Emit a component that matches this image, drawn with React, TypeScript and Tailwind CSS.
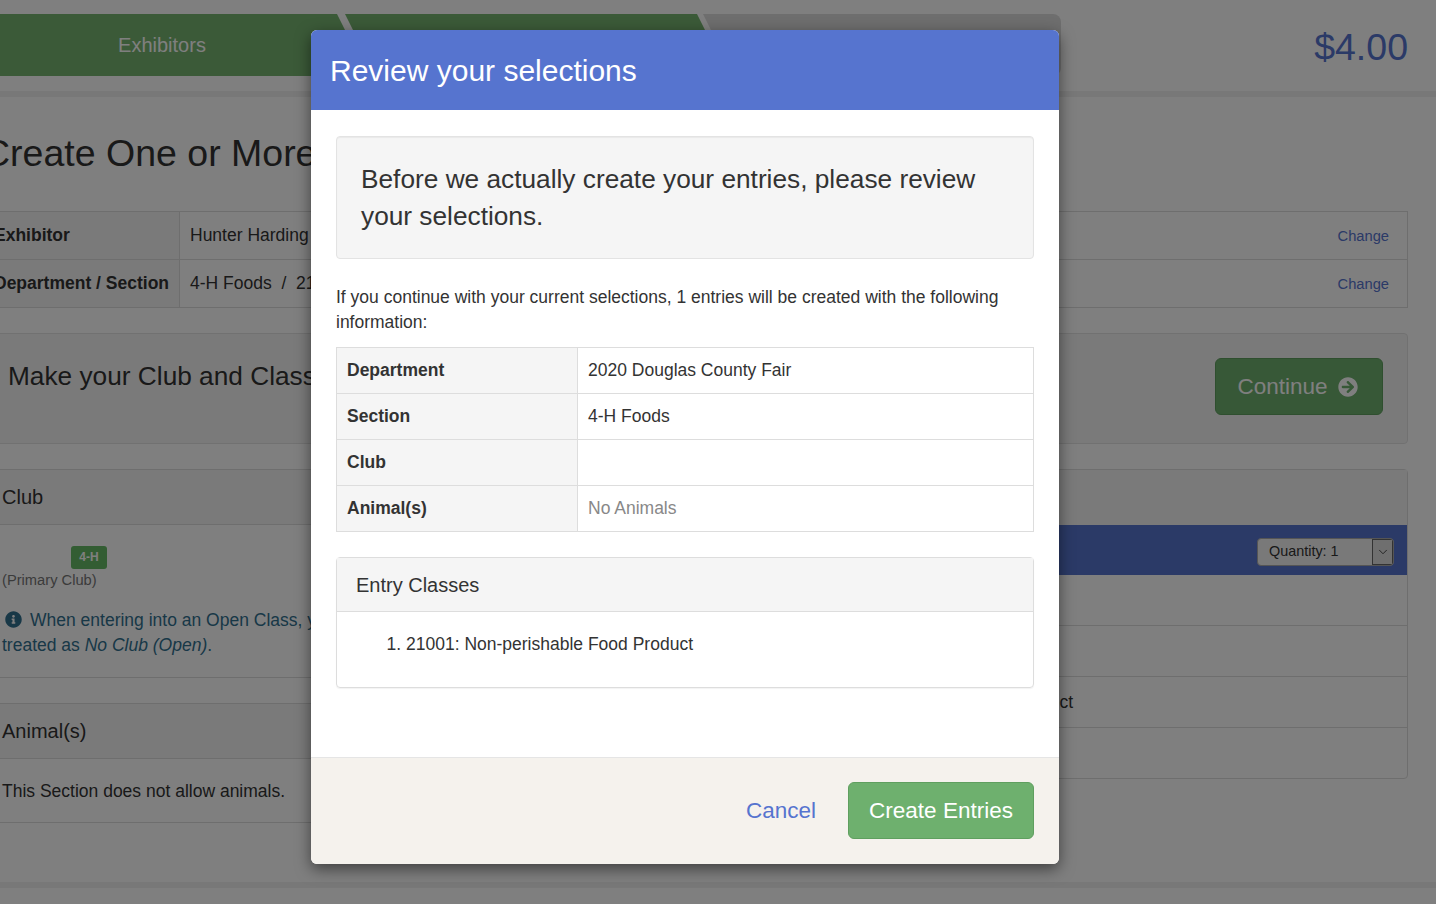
import { FaArrowCircleRight, FaInfoCircle } from "react-icons/fa";
import { LuChevronDown } from "react-icons/lu";

const summary = [
  { label: "Exhibitor", value: "Hunter Harding" },
  { label: "Department / Section", value: "4-H Foods  /  21 - Non-perishable Food Product" },
];

const reviewRows = [
  { label: "Department", value: "2020 Douglas County Fair" },
  { label: "Section", value: "4-H Foods" },
  { label: "Club", value: "" },
  { label: "Animal(s)", value: "No Animals", muted: true },
];

function Background() {
  return (
    <div className="w-[1436px] h-[904px] bg-white overflow-hidden text-[#333] text-[17.5px] flex flex-col">
      {/* top bar */}
      <div className="h-[97px] shrink-0 border-b-[6px] border-[#f0f0f0] flex items-start justify-between pt-[14px] pr-[28px]">
        <div className="flex w-[1061px] h-[62px] rounded-r-lg overflow-hidden text-white text-[20px]">
          <div className="w-[368px] shrink-0 h-full bg-[#76b470] pr-[44px] flex items-center justify-center [clip-path:polygon(0_0,337px_0,368px_62px,0_62px)]">
            Exhibitors
          </div>
          <div className="-ml-[24px] w-[384px] shrink-0 h-full bg-[#76b470] [clip-path:polygon(1px_0,353px_0,384px_62px,32px_62px)]" />
          <div className="-ml-[25px] w-[358px] shrink-0 h-full bg-[#dcdcdc] [clip-path:polygon(0_0,100%_0,100%_100%,31px_100%)]" />
        </div>
        <div className="text-[37.5px] leading-[62px] text-[#5674cf] pt-[2px]">$4.00</div>
      </div>

      <div className="flex-1 -ml-[22px] w-[1430px]">
        <h1 className="text-[37.5px] leading-[40px] mt-[36px] mb-[38px] pl-[5px] whitespace-nowrap">Create One or More Entries</h1>

        {/* summary table */}
        <div className="border border-[#ddd] mb-[25px]">
          {summary.map((row, i) => (
            <div key={row.label} className={`flex items-center ${i > 0 ? "h-[48px] border-t border-[#ddd]" : "h-[47px]"}`}>
              <div className="w-[201px] h-full shrink-0 bg-[#f5f5f5] border-r border-[#ddd] flex items-center pl-[10px] font-bold whitespace-nowrap">
                <span className="pl-[5px]">{row.label}</span>
              </div>
              <div className="flex-1 pl-[10px] whitespace-pre">{row.value}</div>
              <a className="pr-[18px] pt-[2px] text-[14.7px] text-[#5674cf]">Change</a>
            </div>
          ))}
        </div>

        {/* club and class prompt */}
        <div className="h-[111px] bg-[#f5f5f5] border border-[#e3e3e3] rounded flex items-start justify-between pl-[29px] pr-[24px] pt-[24px] mb-[25px]">
          <div className="text-[26.25px] leading-[36px]">Make your Club and Class selections</div>
          <button className="h-[57px] w-[168px] bg-[#6eb06e] border border-[#5f9f5f] rounded-md text-white text-[22.5px] flex items-center justify-center gap-[10px] pr-[3px]">
            Continue <FaArrowCircleRight className="text-[20px]" />
          </button>
        </div>

        <div className="flex gap-[20px] items-start">
          <div className="w-[722px] shrink-0">
            <div className="border border-[#ddd] rounded mb-[25px]">
              <div className="h-[55px] bg-[#f5f5f5] border-b border-[#ddd] flex items-center pl-[23px] text-[20px]">Club</div>
              <div className="h-[152px] pl-[23px] pt-[17px]">
                <div className="pl-[69px] h-[27px]">
                  <span className="inline-block bg-[#66bb66] text-white font-bold text-[12px] leading-[23px] h-[23px] w-[36px] text-center rounded-[3px]">4-H</span>
                </div>
                <div className="text-[14.7px] leading-[22px] text-[#777]">(Primary Club)</div>
                <div className="text-[#31708f] leading-[25px] mt-[17px]">
                  <FaInfoCircle className="inline text-[17px] ml-[3px] mr-[8px] -mt-[3px]" />
                  When entering into an Open Class, your entry will be
                  <br />
                  treated as <em>No Club (Open)</em>.
                </div>
              </div>
            </div>
            <div className="border border-[#ddd] rounded">
              <div className="h-[55px] bg-[#f5f5f5] border-b border-[#ddd] flex items-center pl-[23px] text-[20px]">Animal(s)</div>
              <div className="h-[63px] pl-[23px] pt-[1px] flex items-center">This Section does not allow animals.</div>
            </div>
          </div>

          <div className="flex-1 border border-[#ddd] rounded h-[310px]">
            <div className="h-[55px] bg-[#f5f5f5] flex items-center pl-[15px] text-[20px]">Class</div>
            <div className="h-[50px] bg-[#5674cf] flex items-center justify-end pr-[13px] pt-[3px]">
              <div className="h-[28px] w-[137px] bg-[#f2f2f2] border border-[#aaa] rounded-[4px] flex items-center overflow-hidden text-[14.4px] text-[#333]">
                <span className="flex-1 pl-[11px]">Quantity: 1</span>
                <span className="w-[21px] h-full bg-[#dedede] border border-[#666] flex items-center justify-center">
                  <LuChevronDown className="text-[14px] [stroke-width:1.5]" />
                </span>
              </div>
            </div>
            <div className="h-[51px] border-b border-[#ddd]" />
            <div className="h-[51px] border-b border-[#ddd]" />
            <div className="h-[51px] border-b border-[#ddd] flex items-center justify-end pr-[334px]">Non-perishable Food Product</div>
          </div>
        </div>
      </div>

      <div className="h-[22px] shrink-0 border-t-[6px] border-[#f0f0f0]" />
    </div>
  );
}

function ReviewModal() {
  return (
    <div className="absolute left-[311px] top-[30px] z-40 w-[748px] h-[834px] bg-white rounded-md overflow-hidden shadow-[0_5px_15px_rgba(0,0,0,0.5)] flex flex-col text-[#333] text-[17.5px]">
      <div className="h-[80px] shrink-0 bg-[#5674cf] text-white text-[30px] flex items-center pl-[19px]">Review your selections</div>

      <div className="flex-1 px-[25px] pt-[26px]">
        <div className="h-[123px] bg-[#f5f5f5] border border-[#e3e3e3] rounded shadow-[inset_0_1px_1px_rgba(0,0,0,0.05)] px-[24px] pt-[24px] text-[26.25px] leading-[37px]">
          Before we actually create your entries, please review your selections.
        </div>

        <p className="mt-[26px] leading-[25px]">
          If you continue with your current selections, 1 entries will be created with the following information:
        </p>

        <div className="mt-[12px] border border-[#ddd]">
          {reviewRows.map((row, i) => (
            <div key={row.label} className={`flex ${i > 0 ? "h-[46px] border-t border-[#ddd]" : "h-[45px]"}`}>
              <div className="w-[241px] shrink-0 bg-[#f5f5f5] border-r border-[#ddd] flex items-center pl-[10px] font-bold">{row.label}</div>
              <div className={`flex-1 flex items-center pl-[10px] ${row.muted ? "text-[#888]" : ""}`}>{row.value}</div>
            </div>
          ))}
        </div>

        <div className="mt-[25px] h-[131px] border border-[#ddd] rounded shadow-[0_1px_1px_rgba(0,0,0,0.05)]">
          <div className="h-[54px] bg-[#f5f5f5] border-b border-[#ddd] flex items-center pl-[19px] text-[20px]">Entry Classes</div>
          <ol className="list-decimal pl-[69px] pt-[20px] leading-[25px]">
            <li>21001: Non-perishable Food Product</li>
          </ol>
        </div>
      </div>

      <div className="h-[107px] shrink-0 bg-[#f5f2ed] border-t border-[#e5e5e5] flex items-center justify-end gap-[32px] pr-[25px] pb-[1px] text-[22.5px]">
        <a className="text-[#5674cf]">Cancel</a>
        <button className="w-[186px] h-[57px] bg-[#6eb06e] border border-[#5f9f5f] rounded-md text-white">Create Entries</button>
      </div>
    </div>
  );
}

export default function App() {
  return (
    <div className="relative w-[1436px] h-[904px] overflow-hidden font-['Liberation_Sans',Arial,sans-serif]">
      <Background />
      <div className="absolute inset-0 z-20 bg-black/50" />
      <ReviewModal />
    </div>
  );
}
